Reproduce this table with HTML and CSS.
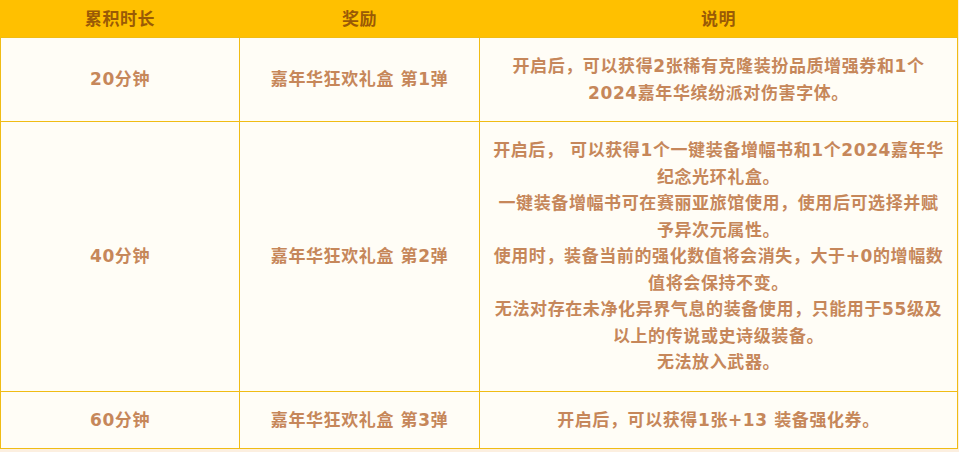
FILE: index.html
```html
<!DOCTYPE html>
<html lang="zh-CN">
<head>
<meta charset="utf-8">
<link rel="stylesheet" href="styles.css">
</head>
<body>
<table class="reward-table">
  <colgroup>
    <col class="c1">
    <col class="c2">
    <col class="c3">
  </colgroup>
  <thead>
    <tr>
      <th>累积时长</th>
      <th>奖励</th>
      <th>说明</th>
    </tr>
  </thead>
  <tbody>
    <tr>
      <td>20分钟</td>
      <td>嘉年华狂欢礼盒 第1弹</td>
      <td>开启后，可以获得2张稀有克隆装扮品质增强券和1个<br>2024嘉年华缤纷派对伤害字体。</td>
    </tr>
    <tr>
      <td>40分钟</td>
      <td>嘉年华狂欢礼盒 第2弹</td>
      <td>开启后， 可以获得1个一键装备增幅书和1个2024嘉年华<br>纪念光环礼盒。<br>一键装备增幅书可在赛丽亚旅馆使用，使用后可选择并赋<br>予异次元属性。<br>使用时，装备当前的强化数值将会消失，大于+0的增幅数<br>值将会保持不变。<br>无法对存在未净化异界气息的装备使用，只能用于55级及<br>以上的传说或史诗级装备。<br>无法放入武器。</td>
    </tr>
    <tr>
      <td>60分钟</td>
      <td>嘉年华狂欢礼盒 第3弹</td>
      <td>开启后，可以获得1张+13 装备强化券。</td>
    </tr>
  </tbody>
</table>
</body>
</html>
```

FILE: styles.css
```css
html, body {
  margin: 0;
  padding: 0;
}
body {
  background: #fcefe0;
  width: 959px;
  height: 452px;
  overflow: hidden;
}
.reward-table {
  border-collapse: collapse;
  table-layout: fixed;
  width: 957px;
  font-family: "DejaVu Sans", "Noto Sans CJK SC", sans-serif;
  font-weight: bold;
  font-size: 17px;
  letter-spacing: 0.6px;
}
.c1 { width: 239px; }
.c2 { width: 240px; }
.c3 { width: 478px; }
.reward-table th {
  background: #ffc000;
  color: #9a5a06;
  height: 36px;
  padding: 0;
  border: 1px solid #ffc000;
  border-bottom: 1px solid #f0bc14;
  text-align: center;
  vertical-align: middle;
  line-height: 20px;
}
.reward-table td {
  background: #fffdf6;
  color: #c6875a;
  border: 1px solid #f0bc14;
  text-align: center;
  vertical-align: middle;
  padding: 15px 2px;
  line-height: 26.5px;
}
```
